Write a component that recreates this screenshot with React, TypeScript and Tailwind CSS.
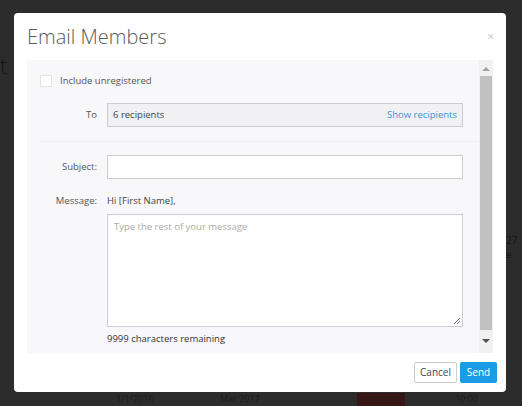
import React from "react";

export default function App() {
  return (
    <div
      className="relative w-[522px] h-[406px] overflow-hidden bg-[#2c2c2c] pt-[13px] pl-[14px]"
      style={{ fontFamily: '"Open Sans", "Liberation Sans", sans-serif' }}
    >
      {/* background page fragments */}
      <div className="absolute left-[0px] top-[52px] text-[22px] leading-[26px] text-[#141414] font-light">t</div>
      <div className="absolute left-[506px] top-[233px] text-[10px] text-[#141414]">27 ≡</div>
      <div className="absolute left-[357px] top-[393px] w-[48px] h-[13px] bg-[#361515]" />
      <div className="absolute left-[116px] top-[392px] text-[9px] text-[#1c1c1c]">1/1/2016</div>
      <div className="absolute left-[220px] top-[392px] text-[9px] text-[#1c1c1c]">Mar 2017</div>
      <div className="absolute left-[455px] top-[392px] text-[9px] text-[#1c1c1c]">10:00</div>

      <div className="relative w-[492px] h-[379px] bg-white rounded-[4px] flex flex-col">
        {/* header */}
        <div className="flex items-start justify-between pl-[13px] pr-[13px] pt-[11px] h-[47px]">
          <div className="text-[20px] leading-[26px] font-light text-[#5a5a5a]">Email Members</div>
          <div className="text-[12px] text-[#c8c8c8] mt-[4px] mr-[-1px]">×</div>
        </div>

        {/* body */}
        <div className="mx-[13px] h-[293px] bg-[#f8f8fa] flex text-[9.5px] text-[#444]">
          <div className="flex-1 flex flex-col">
            <div className="flex items-center pl-[13px] pt-[3px] h-[39px]">
              <div className="w-[12px] h-[12px] bg-white border border-[#e4e4e4]" />
              <span className="ml-[8px] text-[#555]">Include unregistered</span>
            </div>
            <div className="flex items-center mt-[4px]">
              <div className="w-[70px] text-right text-[#555]">To</div>
              <div className="ml-[10px] w-[356px] h-[24px] bg-[#f1f1f3] border border-[#ccc] flex items-center justify-between px-[5px]">
                <span>6 recipients</span>
                <span className="text-[#3b93d9]">Show recipients</span>
              </div>
            </div>
            <div className="mt-[14px] ml-[13px] border-t border-dotted border-[#e6e6e6]" />
            <div className="flex items-center mt-[13px]">
              <div className="w-[70px] text-right text-[#555]">Subject:</div>
              <div className="ml-[10px] w-[356px] h-[24px] bg-white border border-[#ccc]" />
            </div>
            <div className="flex items-center mt-[14px] h-[16px]">
              <div className="w-[70px] text-right text-[#555]">Message:</div>
              <div className="ml-[10px]">Hi [First Name],</div>
            </div>
            <div className="ml-[80px] mt-[5px] w-[356px] h-[113px] bg-white border border-[#ccd] relative px-[6px] pt-[5px] text-[#aaa]">
              Type the rest of your message
              <svg className="absolute right-[1px] bottom-[1px]" width="8" height="8" viewBox="0 0 8 8">
                <path d="M7 1 L1 7 M7 4 L4 7" stroke="#777" strokeWidth="1" />
              </svg>
            </div>
            <div className="ml-[80px] mt-[5px] text-[#333]">9999 characters remaining</div>
          </div>
          {/* scrollbar */}
          <div className="w-[14px] flex flex-col items-center bg-[#f1f1f1]">
            <div className="h-[16px] flex items-center justify-center">
              <svg width="8" height="5" viewBox="0 0 8 5"><path d="M0 5 L4 1 L8 5 Z" fill="#a3a3a3" /></svg>
            </div>
            <div className="w-[12px] flex-1 bg-[#c1c1c1]" />
            <div className="h-[23px] flex items-center justify-center">
              <svg width="8" height="5" viewBox="0 0 8 5"><path d="M0 0 L4 4 L8 0 Z" fill="#505050" /></svg>
            </div>
          </div>
        </div>

        {/* footer */}
        <div className="flex justify-end gap-[3px] pr-[9px] pt-[9px] text-[10px]">
          <button className="h-[21px] w-[43px] border border-[#ccc] bg-white text-[#444] rounded-[2px]">Cancel</button>
          <button className="h-[21px] w-[37px] bg-[#1a9be6] text-white rounded-[2px]">Send</button>
        </div>
      </div>
    </div>
  );
}
